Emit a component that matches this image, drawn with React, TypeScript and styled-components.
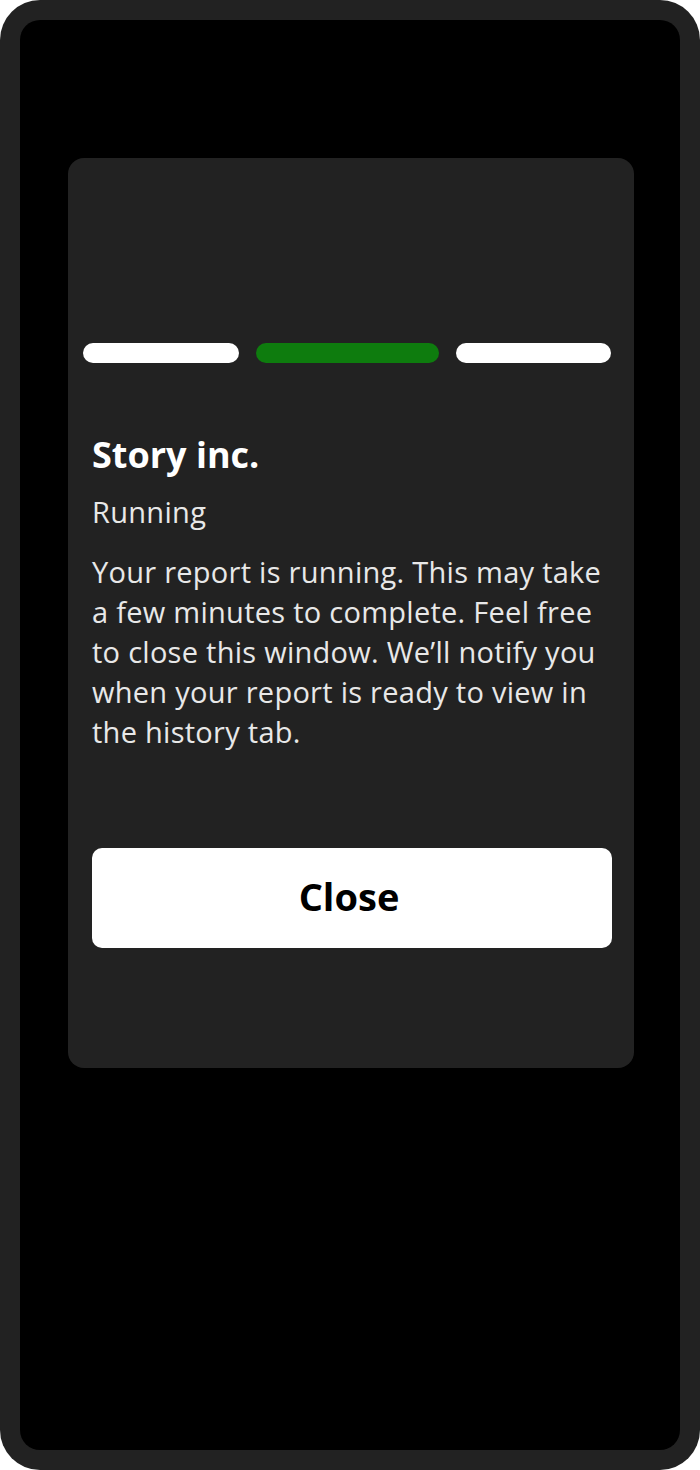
import React from "react";
import styled, { createGlobalStyle } from "styled-components";

const GlobalStyle = createGlobalStyle`
  html, body {
    margin: 0;
    padding: 0;
    background: #ffffff;
  }
  body {
    font-family: "Open Sans", "Lato", sans-serif;
    -webkit-font-smoothing: antialiased;
  }
  * { box-sizing: border-box; }
`;

const Device = styled.div`
  width: 700px;
  height: 1470px;
  background: #222222;
  border-radius: 40px;
  padding: 20px;
`;

const Screen = styled.div`
  height: 100%;
  background: #000000;
  border-radius: 20px;
  padding: 138px 46px 0 48px;
`;

const Card = styled.section`
  background: #222222;
  border-radius: 16px;
  height: 910px;
  padding-top: 185px;
  display: flex;
  flex-direction: column;
`;

const ProgressRow = styled.div`
  display: grid;
  grid-template-columns: 1fr 183px 1fr;
  gap: 17px;
  padding: 0 23px 0 15px;
`;

const Segment = styled.div<{ $active?: boolean }>`
  height: 20px;
  border-radius: 10px;
  background: ${(p) => (p.$active ? "#0e7c0e" : "#ffffff")};
`;

const Content = styled.div`
  display: flex;
  flex-direction: column;
  padding: 0 22px 0 24px;
  margin-top: 72px;
`;

const Title = styled.h2`
  margin: 0;
  color: #ffffff;
  font-size: 36px;
  line-height: 40px;
  font-weight: 700;
`;

const Status = styled.div`
  margin-top: 19px;
  color: #e8e8e8;
  font-size: 29px;
  line-height: 36px;
  letter-spacing: 0.3px;
`;

const Body = styled.p`
  margin: 22px 0 0;
  color: #e8e8e8;
  font-size: 29px;
  line-height: 40px;
  letter-spacing: 0.27px;
`;

const CloseButton = styled.button`
  margin-top: 96px;
  height: 100px;
  padding: 0 6px 4px 0;
  border: none;
  border-radius: 10px;
  background: #ffffff;
  color: #000000;
  font-family: inherit;
  font-size: 38px;
  font-weight: 700;
  cursor: pointer;
`;

export default function App() {
  return (
    <>
      <GlobalStyle />
      <Device>
        <Screen>
          <Card>
            <ProgressRow>
              <Segment />
              <Segment $active />
              <Segment />
            </ProgressRow>
            <Content>
              <Title>Story inc.</Title>
              <Status>Running</Status>
              <Body>
                Your report is running. This may take a few minutes to complete.
                Feel free to close this window. We’ll notify you when your report
                is ready to view in the history tab.
              </Body>
              <CloseButton>Close</CloseButton>
            </Content>
          </Card>
        </Screen>
      </Device>
    </>
  );
}
